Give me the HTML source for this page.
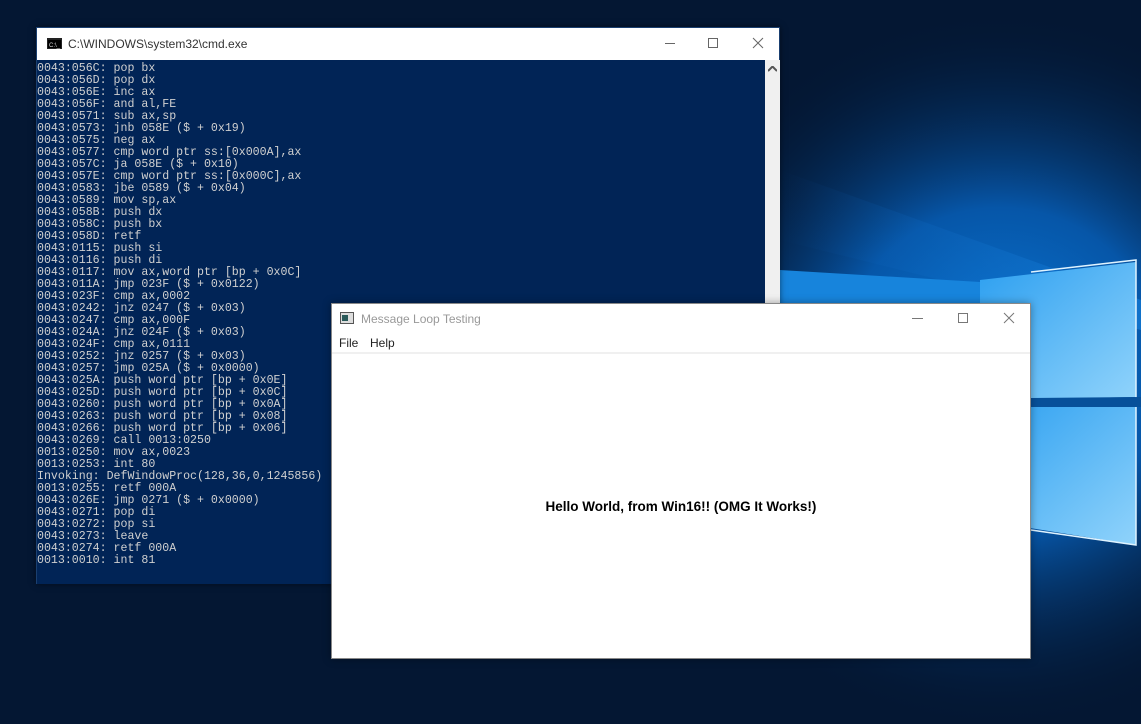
<!DOCTYPE html>
<html><head><style>
body{margin:0;width:1141px;height:724px;overflow:hidden;position:relative;background:#041733;font-family:"Liberation Sans",sans-serif}
.bg{position:absolute;left:0;top:0}
.cmd{position:absolute;left:36px;top:27px;width:744px;height:557px;background:#fff;box-shadow:0 0 6px rgba(0,0,0,.5);border:1px solid #1a3f70;box-sizing:border-box}
.ct{height:32px;position:relative;font-size:12px;color:#333}
.ct .t{position:absolute;left:31px;top:9px}
.con{position:absolute;left:0;top:32px;width:728px;height:524px;background:#012456;color:#d0d0d0;font-family:"Liberation Mono",monospace;font-size:11.6px;line-height:12px;white-space:pre;padding-top:3px;box-sizing:border-box}
.sb{position:absolute;left:728px;top:32px;width:15px;height:524px;background:#f0f0f0}
.msg{position:absolute;left:331px;top:303px;width:700px;height:356px;background:#fff;border:1px solid #888;box-sizing:border-box;box-shadow:0 0 8px rgba(0,0,0,.35)}
.mt{height:28px;position:relative;font-size:12px;color:#999}
.menu{height:20px;font-size:12px;color:#222;position:relative}
.hello{position:absolute;left:0;width:698px;top:195px;text-align:center;font-weight:bold;font-size:13.5px;color:#000}
</style></head><body>
<svg class="bg" width="1141" height="724">
<defs>
<radialGradient id="r" cx="1000" cy="370" r="360" gradientUnits="userSpaceOnUse"><stop offset="0" stop-color="#0a78d8"/><stop offset="0.45" stop-color="#0656a8"/><stop offset="1" stop-color="#041733" stop-opacity="0"/></radialGradient>
<linearGradient id="p" x1="0" y1="0" x2="1" y2="1"><stop offset="0" stop-color="#2c9ff0"/><stop offset="1" stop-color="#90d3fb"/></linearGradient>
<linearGradient id="b" x1="0" y1="0" x2="1" y2="0"><stop offset="0" stop-color="#0a5ab0" stop-opacity="0"/><stop offset="1" stop-color="#1a8ae8"/></linearGradient>
</defs>
<rect width="1141" height="724" fill="#041733"/>
<rect width="1141" height="724" fill="url(#r)"/>
<polygon points="780,170 1141,300 1141,330 780,240" fill="url(#b)" opacity="0.5"/>
<polygon points="780,270 980,282 980,400 780,405" fill="#1784dc"/>
<polygon points="980,280 1136,262 1136,397 980,400" fill="url(#p)"/>
<polygon points="980,407 1136,407 1136,545 980,520" fill="url(#p)"/>
<polygon points="780,410 980,407 980,520 780,495" fill="#137ed8"/>
<polyline points="1031,272 1136,260 1136,545 1031,530" fill="none" stroke="#dff3ff" stroke-width="1.5"/>
<polygon points="1031,398 1141,397 1141,407 1031,407" fill="#07509a"/>
</svg>
<div class="cmd">
<div class="ct"><svg style="position:absolute;left:10px;top:10px" width="15" height="11"><rect width="15" height="11" fill="#222"/><rect x="1" y="2" width="13" height="8" fill="#000"/><text x="2" y="9" fill="#ddd" font-size="6" font-family="Liberation Sans">C:\_</text></svg><span class="t">C:\WINDOWS\system32\cmd.exe</span>
<svg style="position:absolute;left:620px;top:7px" width="120" height="16"><line x1="8" y1="8.5" x2="18" y2="8.5" stroke="#666"/><rect x="51.5" y="3.5" width="9" height="9" fill="none" stroke="#666"/><path d="M96 3 L106 13 M106 3 L96 13" stroke="#666"/></svg></div>
<div class="con">0043:056C: pop bx
0043:056D: pop dx
0043:056E: inc ax
0043:056F: and al,FE
0043:0571: sub ax,sp
0043:0573: jnb 058E ($ + 0x19)
0043:0575: neg ax
0043:0577: cmp word ptr ss:[0x000A],ax
0043:057C: ja 058E ($ + 0x10)
0043:057E: cmp word ptr ss:[0x000C],ax
0043:0583: jbe 0589 ($ + 0x04)
0043:0589: mov sp,ax
0043:058B: push dx
0043:058C: push bx
0043:058D: retf
0043:0115: push si
0043:0116: push di
0043:0117: mov ax,word ptr [bp + 0x0C]
0043:011A: jmp 023F ($ + 0x0122)
0043:023F: cmp ax,0002
0043:0242: jnz 0247 ($ + 0x03)
0043:0247: cmp ax,000F
0043:024A: jnz 024F ($ + 0x03)
0043:024F: cmp ax,0111
0043:0252: jnz 0257 ($ + 0x03)
0043:0257: jmp 025A ($ + 0x0000)
0043:025A: push word ptr [bp + 0x0E]
0043:025D: push word ptr [bp + 0x0C]
0043:0260: push word ptr [bp + 0x0A]
0043:0263: push word ptr [bp + 0x08]
0043:0266: push word ptr [bp + 0x06]
0043:0269: call 0013:0250
0013:0250: mov ax,0023
0013:0253: int 80
Invoking: DefWindowProc(128,36,0,1245856)
0013:0255: retf 000A
0043:026E: jmp 0271 ($ + 0x0000)
0043:0271: pop di
0043:0272: pop si
0043:0273: leave
0043:0274: retf 000A
0013:0010: int 81</div>
<div class="sb"><svg style="position:absolute;left:3px;top:6px" width="9" height="6"><path d="M0 5 L4.5 0.5 L9 5" fill="none" stroke="#555" stroke-width="2"/></svg></div>
</div>
<div class="msg">
<div class="mt"><svg style="position:absolute;left:8px;top:8px" width="14" height="12"><rect x=".5" y=".5" width="13" height="11" fill="#ddd" stroke="#555"/><rect x="2" y="3" width="6" height="6" fill="#2a5a5a"/></svg><span style="position:absolute;left:29px;top:8px">Message Loop Testing</span>
<svg style="position:absolute;left:570px;top:6px" width="120" height="16"><line x1="10" y1="8.5" x2="21" y2="8.5" stroke="#777"/><rect x="56.5" y="3.5" width="9" height="9" fill="none" stroke="#777"/><path d="M102 3 L112 13 M112 3 L102 13" stroke="#777"/></svg></div>
<div class="menu"><span style="position:absolute;left:7px;top:4px">File</span><span style="position:absolute;left:38px;top:4px">Help</span></div>
<div style="height:2px;background:#f0f0f0"></div>
<div class="hello">Hello World, from Win16!! (OMG It Works!)</div>
</div>
</body></html>
